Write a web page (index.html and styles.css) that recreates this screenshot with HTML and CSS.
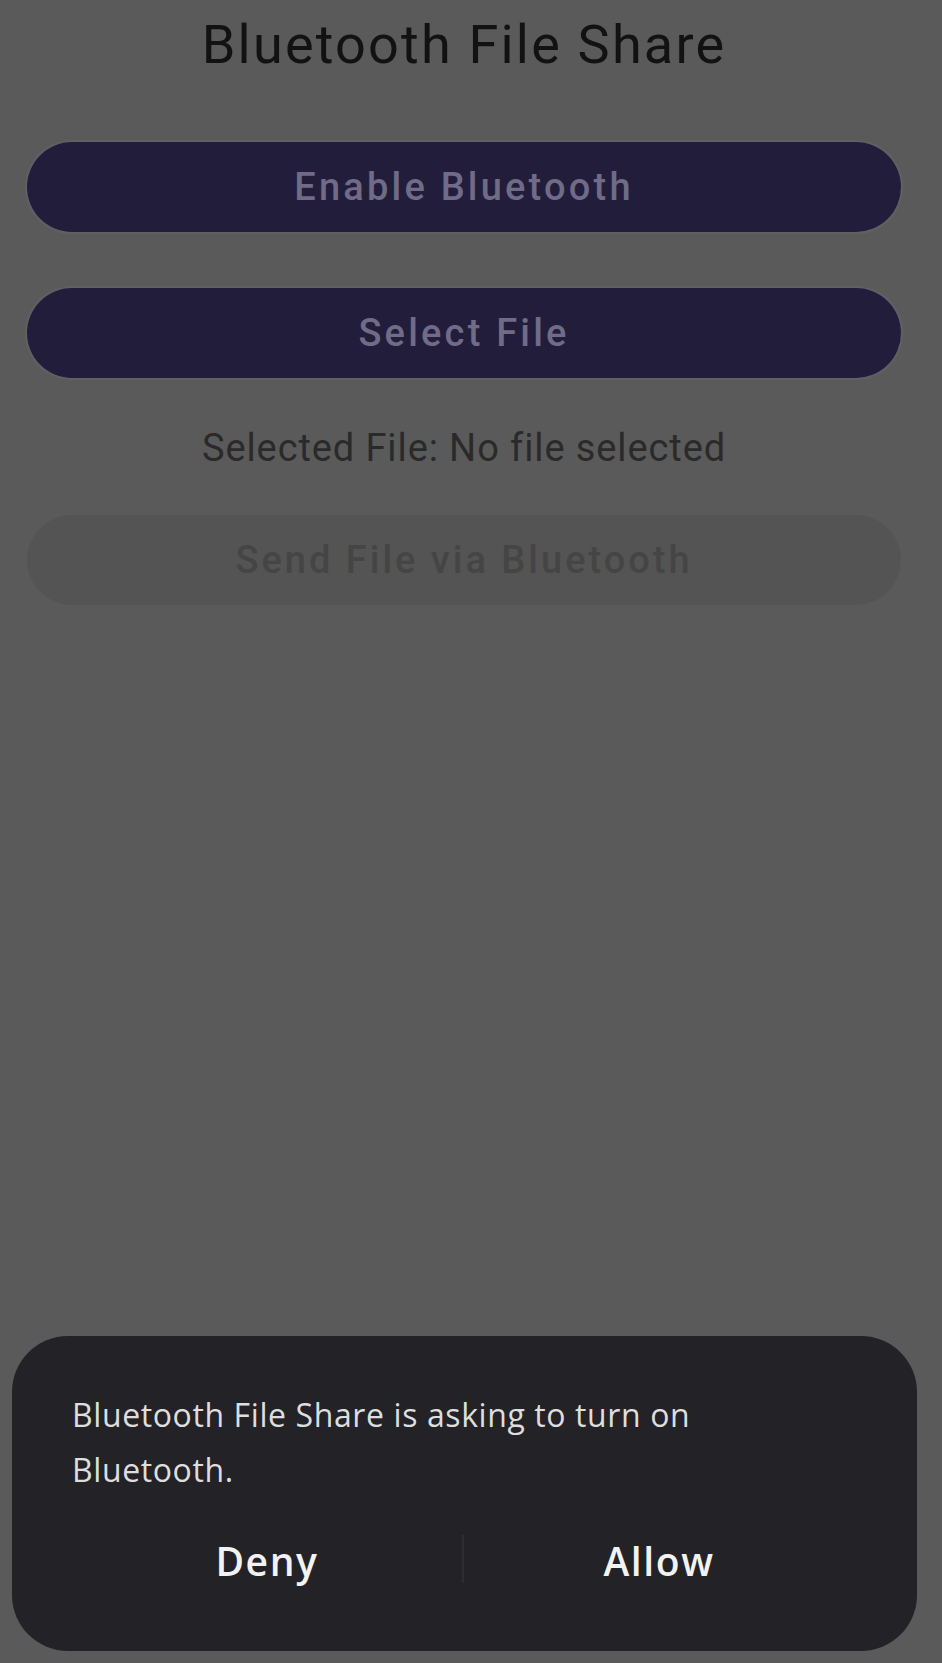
FILE: index.html
```html
<!DOCTYPE html>
<html lang="en">
<head>
<meta charset="utf-8">
<title>Bluetooth File Share</title>
<link rel="stylesheet" href="styles.css">
</head>
<body>
<div class="screen">
  <main class="app">
    <h1 class="title">Bluetooth File Share</h1>
    <button class="btn btn-primary btn-first" type="button">Enable Bluetooth</button>
    <button class="btn btn-primary btn-second" type="button">Select File</button>
    <p class="selected">Selected File: No file selected</p>
    <button class="btn btn-disabled" type="button" disabled>Send File via Bluetooth</button>
  </main>

  <div class="dialog" role="dialog" aria-modal="true">
    <p class="dialog-text">Bluetooth File Share is asking to turn on Bluetooth.</p>
    <div class="dialog-actions">
      <button class="dialog-btn" type="button">Deny</button>
      <span class="dialog-divider"></span>
      <button class="dialog-btn" type="button">Allow</button>
    </div>
  </div>
</div>
</body>
</html>
```

FILE: styles.css
```css
* {
  box-sizing: border-box;
}

html, body {
  margin: 0;
  padding: 0;
  background: #5b5b5b;
}

.screen {
  position: relative;
  min-height: 100vh;
  height: 1663px;
  overflow: hidden;
  background: #5a5a5a;
  font-family: Roboto, "Liberation Sans", sans-serif;
}

.app {
  display: flex;
  flex-direction: column;
  padding: 0 41px 0 27px;
}

.title {
  margin: 14px 0 0;
  font-size: 54px;
  line-height: 62px;
  font-weight: 400;
  letter-spacing: 2.2px;
  color: #121212;
  text-align: center;
}

.btn {
  display: flex;
  align-items: center;
  justify-content: center;
  width: 100%;
  height: 90px;
  border: none;
  border-radius: 45px;
  padding: 0;
  font-family: Roboto, "Liberation Sans", sans-serif;
  font-size: 38px;
  font-weight: 500;
  letter-spacing: 3.2px;
}

.btn-primary {
  background: #231d3c;
  color: #706b86;
  box-shadow: 0 0 3px 1px rgba(120, 118, 135, 0.45);
}

.btn-first {
  margin-top: 66px;
}

.btn-second {
  margin-top: 56px;
}

.selected {
  margin: 48px 0 0;
  font-size: 38px;
  line-height: normal;
  letter-spacing: 0.9px;
  color: #2a2a2a;
  text-align: center;
}

.btn-disabled {
  margin-top: 45px;
  background: #545454;
  color: #454545;
  letter-spacing: 3px;
}

.dialog {
  position: absolute;
  left: 12px;
  bottom: 12px;
  width: 905px;
  height: 315px;
  display: flex;
  flex-direction: column;
  padding: 51px 63px 0 60px;
  border-radius: 56px;
  background: #232227;
  font-family: "Open Sans", "Liberation Sans", sans-serif;
}

.dialog-text {
  margin: 0;
  width: 660px;
  font-size: 32px;
  line-height: 55px;
  letter-spacing: 0.6px;
  color: #dedede;
}

.dialog-actions {
  display: flex;
  align-items: stretch;
  margin-top: 37px;
  height: 52px;
}

.dialog-btn {
  flex: 1;
  border: none;
  background: transparent;
  padding: 0;
  font-family: "Open Sans", "Liberation Sans", sans-serif;
  font-size: 39px;
  font-weight: 600;
  letter-spacing: 1.6px;
  color: #f2f2f2;
}

.dialog-divider {
  width: 2px;
  margin: 1px 0 3px;
  background: #2e2d32;
}
```
